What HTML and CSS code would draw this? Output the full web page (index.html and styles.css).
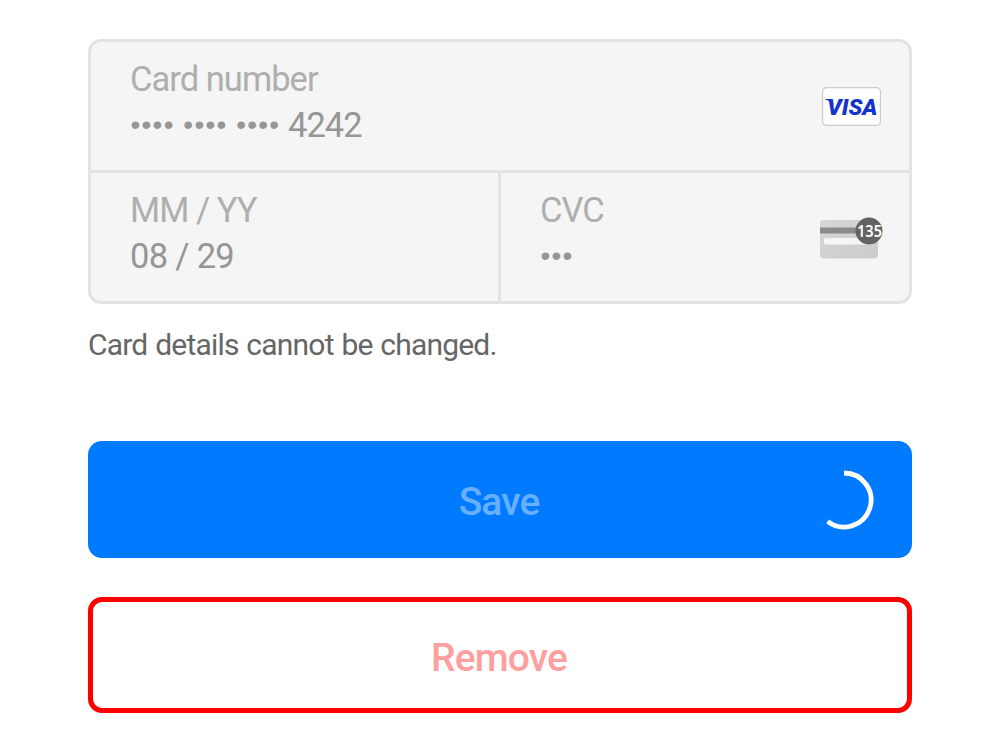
FILE: index.html
```html
<!DOCTYPE html>
<html lang="en">
<head>
<meta charset="utf-8">
<title>Card details</title>
<link rel="stylesheet" href="styles.css">
</head>
<body>
<main class="page">
  <section class="card-form">
    <div class="field field-number">
      <div class="text"><div class="label">Card number</div><div class="value"><span class="dots">•••• •••• ••••</span> 4242</div></div>
      <svg class="visa" width="60" height="40" viewBox="0 0 60 40"><rect x=".6" y=".6" width="57.8" height="37.8" rx="4" fill="#fff" stroke="#ccc" stroke-width="1.2"/>
      <path d="M3.5 12H10L12 18Q9 14 3.5 12.8Z" fill="#1434cb"/>
      <text class="visa-text" x="5" y="28" textLength="50.5" lengthAdjust="spacingAndGlyphs">VISA</text></svg>
    </div>
    <div class="row">
      <div class="field field-date"><div class="text"><div class="label">MM / YY</div><div class="value date">08 / 29</div></div></div>
      <div class="field field-cvc">
        <div class="text"><div class="label">CVC</div><div class="value"><span class="dots">•••</span></div></div>
        <svg class="cvc" width="64" height="44" viewBox="0 0 64 44">
          <defs><linearGradient id="card" x2="1" y2="1"><stop stop-color="#d6d6d6"/><stop offset="1" stop-color="#cbcbcb"/></linearGradient><clipPath id="badge"><circle cx="49" cy="15" r="13.5"/></clipPath></defs>
          <rect x="0" y="4" width="58" height="38.5" rx="4" fill="url(#card)"/><rect y="11.5" width="58" height="6" fill="#8b8b8b"/><rect x="4" y="22" width="50" height="6.5" rx="2" fill="#f5f5f5"/><circle cx="49" cy="15" r="13.5" fill="#636363"/><text class="cvc-text" x="37" y="20.5" textLength="25" lengthAdjust="spacingAndGlyphs" clip-path="url(#badge)">135</text></svg>
      </div>
    </div>
  </section>
  <p class="note">Card details cannot be changed.</p>
  <button class="button save"><span>Save</span><svg class="spinner" width="62" height="62" viewBox="0 0 62 62"><path d="M31 4A27 27 0 1 1 14.6 52.4" fill="none" stroke="#fff" stroke-width="4.8"/></svg></button>
  <button class="button remove"><span>Remove</span></button>
</main>
</body>
</html>
```
FILE: styles.css
```css
* { box-sizing: border-box; }
body { margin: 0; background: #fff; font-family: Roboto, sans-serif; }
.page { width: 824px; margin: 0 auto; padding-top: 39px; }
.card-form { height: 265px; border: 3px solid #e3e3e4; border-radius: 13px; background: #f5f5f5; overflow: hidden; }
.field { display: flex; justify-content: space-between; padding-left: 39px; }
.field-number { height: 131px; border-bottom: 3px solid #e3e3e4; padding-top: 14px; }
.row { display: flex; height: 128px; }
.row .field { padding-top: 14px; }
.field-date { width: 410px; border-right: 3px solid #e3e3e4; }
.field-cvc { flex: 1; }
.label, .value { height: 46px; font-size: 34.5px; line-height: 46px; letter-spacing: -0.97px; white-space: nowrap; }
.label { color: #aeaeae; }
.value { color: #969696; }
.date { letter-spacing: -0.7px; }
.dots { margin-left: .5px; font: 28px/1 "Liberation Sans", sans-serif; letter-spacing: 1.25px; word-spacing: -0.4px; vertical-align: 3px; }
.visa { margin: 31px 27px 0 0; }
.visa-text { font: italic 900 22.5px Roboto, sans-serif; fill: #1434cb; }
.cvc { margin: 29px 25px 0 0; }
.cvc-text { font: 600 16px "Noto Sans", sans-serif; fill: #fff; }
.note { margin: 22px 0 0; font-size: 30px; line-height: 38px; letter-spacing: -0.8px; word-spacing: 1.1px; color: #666; }
.button { display: flex; align-items: center; justify-content: center; width: 824px; height: 117px; padding: 4px 2px 0 0; border: 0; border-radius: 14px; font: 500 39px Roboto, sans-serif; letter-spacing: -0.9px; }
.save { position: relative; margin-top: 77px; background: #007bff; color: #66b0ff; }
.spinner { position: absolute; right: 37px; top: 28px; }
.remove { height: 116px; margin-top: 39px; padding-top: 5px; border: 5.5px solid #f00; background: #fff; color: #ff9f9f; }
```
